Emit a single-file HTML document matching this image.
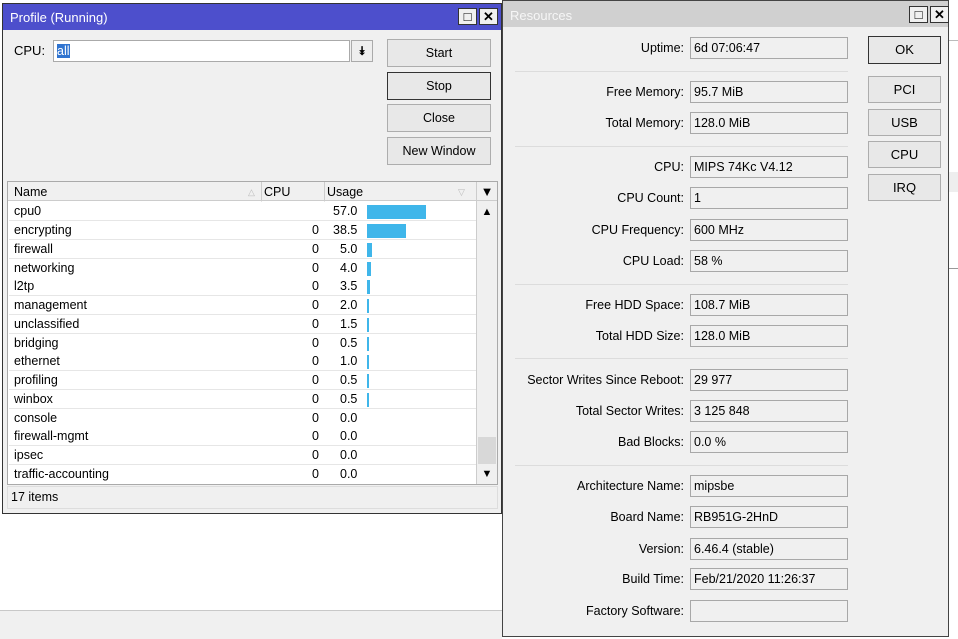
<!DOCTYPE html><html><head><style>
*{box-sizing:border-box;margin:0;padding:0}
body{width:958px;height:639px;overflow:hidden;background:#fff;font-family:"Liberation Sans",sans-serif;font-size:12px;color:#000;position:relative}
.a{position:absolute}
.btn{position:absolute;border:1px solid #adadad;background:#e8e8e8;text-align:center;font-size:12.5px}
.fld{position:absolute;left:690px;width:158px;height:22px;border:1px solid #a8a8a8;background:#f0f0f0;padding-left:3px;line-height:20px;font-size:12.5px}
.lbl{position:absolute;right:274px;font-size:12.5px;line-height:22px}
.sep{position:absolute;left:515px;width:333px;height:1px;background:#dcdcdc}
.row{position:absolute;left:9px;width:467px;height:19px;border-bottom:1px solid #e6e6e6;background:#fff;font-size:12.5px;line-height:18px}
.row span{position:absolute}
.bar{position:absolute;left:358px;top:3px;height:14px;background:#3fb6ea}
.tb{position:absolute;width:19px;height:17px;border:1px solid #333;background:#f0f0f0;font-size:13px;font-weight:bold;text-align:center;line-height:15px}
</style></head><body>
<div class="a" style="left:0;top:610px;width:502px;height:29px;background:#f0f0f0;border-top:1px solid #c8c8c8"></div>
<div class="a" style="left:948px;top:0;width:10px;height:639px;background:#fff"></div>
<div class="a" style="left:948px;top:40px;width:10px;height:1px;background:#bbb"></div>
<div class="a" style="left:948px;top:172px;width:10px;height:20px;background:#eee"></div>
<div class="a" style="left:948px;top:268px;width:10px;height:1px;background:#999"></div>
<!-- Profile window -->
<div class="a" style="left:2px;top:3px;width:500px;height:511px;background:#f0f0f0;border:1px solid #333"></div>
<div class="a" style="left:3px;top:4px;width:498px;height:26px;background:#4d4fcc;color:#fff;font-size:13px;line-height:27px;padding-left:7px">Profile (Running)</div>
<div class="tb" style="left:458px;top:8px">□</div><div class="tb" style="left:479px;top:8px">✕</div>
<div class="a" style="left:14px;top:43px;font-size:13px">CPU:</div>
<div class="a" style="left:53px;top:40px;width:297px;height:22px;background:#fff;border:1px solid #aaa"><span style="position:absolute;left:3px;top:3px;background:#3074d0;color:#fff;line-height:14px;font-size:12.5px">all</span></div>
<div class="a" style="left:351px;top:40px;width:22px;height:22px;border:1px solid #aaa;background:#eee;text-align:center;font-size:12px;font-weight:bold;line-height:20px">⯯</div>
<div class="btn" style="left:387px;top:39px;width:104px;height:28px;line-height:26px">Start</div>
<div class="btn" style="left:387px;top:72px;width:104px;height:28px;line-height:26px;border:1px solid #333">Stop</div>
<div class="btn" style="left:387px;top:104px;width:104px;height:28px;line-height:26px">Close</div>
<div class="btn" style="left:387px;top:137px;width:104px;height:28px;line-height:26px">New Window</div>
<div class="a" style="left:7px;top:181px;width:491px;height:304px;border:1px solid #aaa;background:#fff"></div>
<div class="a" style="left:8px;top:182px;width:468px;height:19px;background:#f0f0f0;border-bottom:1px solid #ccc;font-size:12.5px;line-height:20px">
<span class="a" style="left:6px">Name</span><span class="a" style="left:240px;color:#bbb;font-size:9px">△</span>
<span class="a" style="left:253px;height:19px;border-left:1px solid #ccc;padding-left:2px">CPU</span>
<span class="a" style="left:316px;height:19px;border-left:1px solid #ccc;padding-left:2px">Usage</span><span class="a" style="left:450px;color:#bbb;font-size:9px">▽</span></div>
<div class="a" style="left:476px;top:182px;width:21px;height:302px;background:#f0f0f0;border-left:1px solid #ccc"></div>
<div class="a" style="left:477px;top:182px;width:20px;height:19px;text-align:center;font-size:13px;line-height:19px;border-bottom:1px solid #ccc">▼</div>
<div class="a" style="left:477px;top:203px;width:20px;height:19px;text-align:center;font-size:11px;line-height:19px">▲</div>
<div class="a" style="left:478px;top:437px;width:18px;height:27px;background:#d8d8d8"></div>
<div class="a" style="left:477px;top:465px;width:20px;height:19px;text-align:center;font-size:11px;line-height:19px">▼</div>
<div class="a" style="left:261px;top:201px;width:1px;height:283px;background:#e6e6e6"></div>
<div class="a" style="left:324px;top:201px;width:1px;height:283px;background:#e6e6e6"></div>
<div class="row" style="top:202px"><span style="left:5px">cpu0</span><span style="left:324px">57.0</span><div class="bar" style="width:59px"></div></div>
<div class="row" style="top:221px"><span style="left:5px">encrypting</span><span style="left:303px">0</span><span style="left:324px">38.5</span><div class="bar" style="width:39px"></div></div>
<div class="row" style="top:240px"><span style="left:5px">firewall</span><span style="left:303px">0</span><span style="left:331px">5.0</span><div class="bar" style="width:5px"></div></div>
<div class="row" style="top:259px"><span style="left:5px">networking</span><span style="left:303px">0</span><span style="left:331px">4.0</span><div class="bar" style="width:4px"></div></div>
<div class="row" style="top:277px"><span style="left:5px">l2tp</span><span style="left:303px">0</span><span style="left:331px">3.5</span><div class="bar" style="width:3px"></div></div>
<div class="row" style="top:296px"><span style="left:5px">management</span><span style="left:303px">0</span><span style="left:331px">2.0</span><div class="bar" style="width:2px"></div></div>
<div class="row" style="top:315px"><span style="left:5px">unclassified</span><span style="left:303px">0</span><span style="left:331px">1.5</span><div class="bar" style="width:2px"></div></div>
<div class="row" style="top:334px"><span style="left:5px">bridging</span><span style="left:303px">0</span><span style="left:331px">0.5</span><div class="bar" style="width:2px"></div></div>
<div class="row" style="top:352px"><span style="left:5px">ethernet</span><span style="left:303px">0</span><span style="left:331px">1.0</span><div class="bar" style="width:2px"></div></div>
<div class="row" style="top:371px"><span style="left:5px">profiling</span><span style="left:303px">0</span><span style="left:331px">0.5</span><div class="bar" style="width:2px"></div></div>
<div class="row" style="top:390px"><span style="left:5px">winbox</span><span style="left:303px">0</span><span style="left:331px">0.5</span><div class="bar" style="width:2px"></div></div>
<div class="row" style="top:409px"><span style="left:5px">console</span><span style="left:303px">0</span><span style="left:331px">0.0</span></div>
<div class="row" style="top:427px"><span style="left:5px">firewall-mgmt</span><span style="left:303px">0</span><span style="left:331px">0.0</span></div>
<div class="row" style="top:446px"><span style="left:5px">ipsec</span><span style="left:303px">0</span><span style="left:331px">0.0</span></div>
<div class="row" style="top:465px;border-bottom:none"><span style="left:5px">traffic-accounting</span><span style="left:303px">0</span><span style="left:331px">0.0</span></div>
<div class="a" style="left:7px;top:486px;width:491px;height:23px;border:1px solid #ddd;background:#f0f0f0;padding-left:3px;line-height:21px;font-size:12.5px">17 items</div>
<!-- Resources window -->
<div class="a" style="left:502px;top:0;width:447px;height:637px;background:#f0f0f0;border:1px solid #444"></div>
<div class="a" style="left:503px;top:1px;width:445px;height:26px;background:#d0d0d0;color:#f6f6f6;font-size:13px;line-height:30px;padding-left:7px">Resources</div>
<div class="tb" style="left:909px;top:6px">□</div><div class="tb" style="left:930px;top:6px">✕</div>
<div class="btn" style="left:868px;top:36px;width:73px;height:28px;line-height:26px;border:1px solid #333;font-size:13px">OK</div>
<div class="btn" style="left:868px;top:76px;width:73px;height:27px;line-height:25px;font-size:13px">PCI</div>
<div class="btn" style="left:868px;top:109px;width:73px;height:27px;line-height:25px;font-size:13px">USB</div>
<div class="btn" style="left:868px;top:141px;width:73px;height:27px;line-height:25px;font-size:13px">CPU</div>
<div class="btn" style="left:868px;top:174px;width:73px;height:27px;line-height:25px;font-size:13px">IRQ</div>
<div class="sep" style="top:71px"></div><div class="sep" style="top:146px"></div><div class="sep" style="top:284px"></div><div class="sep" style="top:358px"></div><div class="sep" style="top:465px"></div>
<div class="lbl" style="top:37px">Uptime:</div><div class="fld" style="top:37px">6d 07:06:47</div>
<div class="lbl" style="top:81px">Free Memory:</div><div class="fld" style="top:81px">95.7 MiB</div>
<div class="lbl" style="top:112px">Total Memory:</div><div class="fld" style="top:112px">128.0 MiB</div>
<div class="lbl" style="top:156px">CPU:</div><div class="fld" style="top:156px">MIPS 74Kc V4.12</div>
<div class="lbl" style="top:187px">CPU Count:</div><div class="fld" style="top:187px">1</div>
<div class="lbl" style="top:219px">CPU Frequency:</div><div class="fld" style="top:219px">600 MHz</div>
<div class="lbl" style="top:250px">CPU Load:</div><div class="fld" style="top:250px">58 %</div>
<div class="lbl" style="top:294px">Free HDD Space:</div><div class="fld" style="top:294px">108.7 MiB</div>
<div class="lbl" style="top:325px">Total HDD Size:</div><div class="fld" style="top:325px">128.0 MiB</div>
<div class="lbl" style="top:369px">Sector Writes Since Reboot:</div><div class="fld" style="top:369px">29 977</div>
<div class="lbl" style="top:400px">Total Sector Writes:</div><div class="fld" style="top:400px">3 125 848</div>
<div class="lbl" style="top:431px">Bad Blocks:</div><div class="fld" style="top:431px">0.0 %</div>
<div class="lbl" style="top:475px">Architecture Name:</div><div class="fld" style="top:475px">mipsbe</div>
<div class="lbl" style="top:506px">Board Name:</div><div class="fld" style="top:506px">RB951G-2HnD</div>
<div class="lbl" style="top:538px">Version:</div><div class="fld" style="top:538px">6.46.4 (stable)</div>
<div class="lbl" style="top:568px">Build Time:</div><div class="fld" style="top:568px">Feb/21/2020 11:26:37</div>
<div class="lbl" style="top:600px">Factory Software:</div><div class="fld" style="top:600px"></div>
</body></html>
